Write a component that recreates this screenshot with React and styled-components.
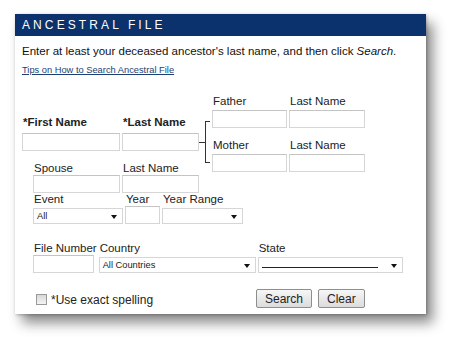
import React from 'react'
import styled, { createGlobalStyle } from 'styled-components'

const GlobalStyle = createGlobalStyle`
  body {
    margin: 0;
    background: #fff;
    font-family: "Liberation Sans", Arial, sans-serif;
  }
`;

function Select({ width, value, line }) {
  return (
    <SelectBox width={width}>
      {line ? <EmptyLine /> : <SelectValue>{value}</SelectValue>}
      <Arrow />
    </SelectBox>
  );
}

function Field({ label, width, bold, gap, children }) {
  return (
    <FieldWrap>
      <Label bold={bold} gap={gap}>{label}</Label>
      {children || <Input width={width} />}
    </FieldWrap>
  );
}

export default function App() {
  return (
    <Page>
      <GlobalStyle />
      <Panel>
        <Header>ANCESTRAL FILE</Header>
        <Body>
          <Intro>
            Enter at least your deceased ancestor's last name, and then click <em>Search</em>.
          </Intro>
          <TipsLink href="#">Tips on How to Search Ancestral File</TipsLink>

          <NamesBlock>
            <Row>
              <Field label="*First Name" width={98} bold gap={4} />
              <Field label="*Last Name" width={77} bold gap={4} />
            </Row>
            <Bracket>
              <Stub />
              <Brace />
            </Bracket>
            <Parents>
              <Row>
                <Field label="Father" width={75} gap={2} />
                <Field label="Last Name" width={76} gap={2} />
              </Row>
              <Row>
                <Field label="Mother" width={75} gap={2} />
                <Field label="Last Name" width={76} gap={2} />
              </Row>
            </Parents>
          </NamesBlock>

          <Indented>
            <Row>
              <Field label="Spouse" width={87} />
              <Field label="Last Name" width={77} />
            </Row>
            <Row>
              <Field label="Event">
                <Select width={90} value="All" />
              </Field>
              <Field label="Year" width={35} />
              <Field label="Year Range">
                <Select width={81} />
              </Field>
            </Row>
            <PlaceRow>
              <Field label="File Number" width={61} />
              <Field label="Country">
                <Select width={157} value="All Countries" />
              </Field>
              <Field label="State">
                <Select width={145} line />
              </Field>
            </PlaceRow>
          </Indented>

          <Footer>
            <CheckLabel>
              <CheckBox />
              *Use exact spelling
            </CheckLabel>
            <Buttons>
              <Button>Search</Button>
              <Button>Clear</Button>
            </Buttons>
          </Footer>
        </Body>
      </Panel>
    </Page>
  );
}

const Page = styled.div`
  padding: 14px 0 0 15px;
  height: 334px;
`;

const Panel = styled.div`
  width: 411px;
  height: 300px;
  background: #fff;
  box-shadow: 1px 1px 3px rgba(0, 0, 0, 0.25), 7px 9px 12px rgba(0, 0, 0, 0.45);
`;

const Header = styled.div`
  height: 22px;
  background: #0b326c;
  color: #fff;
  font-size: 12px;
  letter-spacing: 3.1px;
  line-height: 23px;
  padding-left: 7px;
`;

const Body = styled.div`
  padding: 8px 0 0 7px;
`;

const Intro = styled.div`
  font-size: 11.5px;
  color: #111;
  line-height: 15px;

  em {
    font-style: italic;
  }
`;

const TipsLink = styled.a`
  display: inline-block;
  margin-top: 5px;
  font-size: 9.3px;
  line-height: 11px;
  color: #1d3f73;
  text-decoration: underline;
`;

const NamesBlock = styled.div`
  display: flex;
  align-items: center;
  margin-top: 18px;
`;

const Row = styled.div`
  display: flex;
  gap: 2px;
  align-items: flex-end;
`;

const Parents = styled.div`
  display: flex;
  flex-direction: column;
  gap: 11px;
`;

const Bracket = styled.div`
  display: flex;
  align-items: center;
  margin: 17px 2px 0 0;
`;

const Stub = styled.div`
  width: 6px;
  border-top: 1px solid #333;
`;

const Brace = styled.div`
  width: 4px;
  height: 40px;
  border: 1px solid #333;
  border-right: none;
`;

const FieldWrap = styled.div`
  display: flex;
  flex-direction: column;
`;

const Label = styled.div`
  font-size: 11.5px;
  font-weight: ${p => (p.bold ? 'bold' : 'normal')};
  color: #222;
  line-height: 13px;
  white-space: nowrap;
  margin-bottom: ${p => p.gap || 0}px;
  padding-left: 1px;
`;

const Input = styled.div`
  width: ${p => p.width}px;
  height: 18px;
  box-sizing: border-box;
  border: 1px solid #d6d6d6;
  border-top-color: #c4c4c4;
  background: #fff;
`;

const Indented = styled.div`
  padding-left: 11px;
  display: flex;
  flex-direction: column;
  margin-top: -10px;
`;

const PlaceRow = styled(Row)`
  margin-top: 18px;
`;

const SelectBox = styled.div`
  width: ${p => p.width}px;
  height: 16px;
  margin-top: 2px;
  box-sizing: border-box;
  border: 1px solid #d6d6d6;
  display: flex;
  align-items: center;
  padding: 0 5px 0 3px;
`;

const SelectValue = styled.span`
  flex: 1;
  font-size: 9.3px;
  color: #222;
`;

const EmptyLine = styled.span`
  flex: 1;
  height: 0;
  border-bottom: 1px solid #222;
  margin: 4px 13px 0 0;
`;

const Arrow = styled.span`
  width: 0;
  height: 0;
  border-left: 3px solid transparent;
  border-right: 3px solid transparent;
  border-top: 4px solid #111;
  margin-top: 2px;
`;

const Footer = styled.div`
  display: flex;
  align-items: center;
  margin-top: 16px;
  padding-left: 14px;
`;

const CheckLabel = styled.label`
  display: flex;
  align-items: center;
  font-size: 12px;
  color: #222;
  gap: 4px;
  width: 220px;
  margin-top: 2px;
`;

const CheckBox = styled.span`
  width: 9px;
  height: 9px;
  border: 1px solid #999;
  background: linear-gradient(#d8d8d8, #f4f4f4);
`;

const Buttons = styled.div`
  display: flex;
  gap: 6px;
`;

const Button = styled.button`
  font-family: "Liberation Sans", Arial, sans-serif;
  font-size: 12px;
  color: #222;
  height: 19px;
  padding: 0 8px;
  border: 1px solid #8e8e8e;
  border-radius: 2px;
  background: linear-gradient(#f6f6f6, #dcdcdc);
`;
